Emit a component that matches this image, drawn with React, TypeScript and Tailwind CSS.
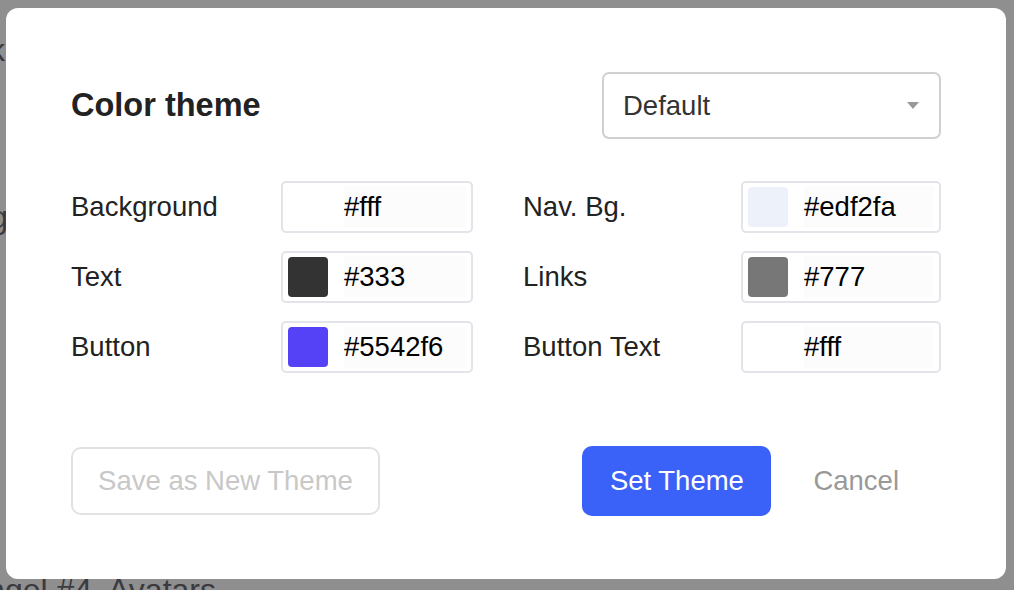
import type { ReactNode } from 'react'

interface ColorFieldProps {
  label: string
  value: string
  swatch: string
  labelWidth: string
  boxWidth: string
}

function ColorField({ label, value, swatch, labelWidth, boxWidth }: ColorFieldProps) {
  return (
    <div className="flex items-center">
      <span className={`${labelWidth} text-[27.5px] leading-none text-[#222]`}>{label}</span>
      <div
        className={`${boxWidth} h-[52px] flex items-center gap-[16px] px-[5px] rounded-[5px] border-2 border-[#e3e3ea] bg-white`}
      >
        <div className="w-[40px] h-[40px] rounded-[4px] shrink-0" style={{ backgroundColor: swatch }} />
        <div className="flex-1 h-[42px] flex items-center bg-[#fcfcfc] text-[27.5px] text-black">
          {value}
        </div>
      </div>
    </div>
  )
}

function BgLine({ children, className }: { children: ReactNode; className: string }) {
  return (
    <div className={`flex justify-end whitespace-nowrap text-[32px] leading-[1.2] text-[#3a3a3f] ${className}`}>
      <span>{children}</span>
    </div>
  )
}

export default function App() {
  const rows = [
    {
      left: { label: 'Background', value: '#fff', swatch: '#ffffff' },
      right: { label: 'Nav. Bg.', value: '#edf2fa', swatch: '#edf2fa' },
    },
    {
      left: { label: 'Text', value: '#333', swatch: '#333333' },
      right: { label: 'Links', value: '#777', swatch: '#777777' },
    },
    {
      left: { label: 'Button', value: '#5542f6', swatch: '#5542f6' },
      right: { label: 'Button Text', value: '#fff', swatch: '#ffffff' },
    },
  ]

  return (
    <div className="relative w-[1014px] h-[590px] overflow-hidden bg-[#8f8f8f] font-['Liberation_Sans',Arial,sans-serif]">
      {/* page behind the modal */}
      <div className="flex flex-col">
        <BgLine className="w-[5px] mt-[31px]">Block</BgLine>
        <BgLine className="w-[8px] mt-[129px]">Setting</BgLine>
        <BgLine className="w-[216px] mt-[334px]">Angel #4. Avatars</BgLine>
      </div>

      <div className="absolute inset-0 pl-[6px] pt-[8px]">
        <div className="w-[1000px] rounded-[12px] bg-white px-[65px] pt-[64px] pb-[63px]">
          <div className="flex items-center justify-between">
            <h2 className="text-[32.5px] font-bold text-[#222] leading-none">Color theme</h2>
            <div className="w-[339px] h-[67px] flex items-center justify-between pl-[19px] pr-[20px] rounded-[7px] border-2 border-[#d0d0d0]">
              <span className="text-[27.5px] text-[#333]">Default</span>
              <svg width="12" height="7" viewBox="0 0 12 7">
                <polygon points="0,0 12,0 6,7" fill="#999" />
              </svg>
            </div>
          </div>

          <div className="mt-[42px] flex flex-col gap-[18px]">
            {rows.map((row) => (
              <div key={row.left.label} className="flex items-center gap-[50px]">
                <ColorField {...row.left} labelWidth="w-[210px]" boxWidth="w-[192px]" />
                <ColorField {...row.right} labelWidth="w-[218px]" boxWidth="w-[200px]" />
              </div>
            ))}
          </div>

          <div className="mt-[73px] flex items-center justify-between">
            <button className="w-[309px] h-[68px] rounded-[10px] border-2 border-[#e2e2e2] text-[27.5px] text-[#c8c8c8]">
              Save as New Theme
            </button>
            <div className="flex items-center">
              <button className="w-[189px] h-[70px] rounded-[10px] bg-[#3a62f8] text-[27.5px] text-white">
                Set Theme
              </button>
              <button className="px-[42px] h-[70px] text-[27.5px] text-[#999]">Cancel</button>
            </div>
          </div>
        </div>
      </div>
    </div>
  )
}
